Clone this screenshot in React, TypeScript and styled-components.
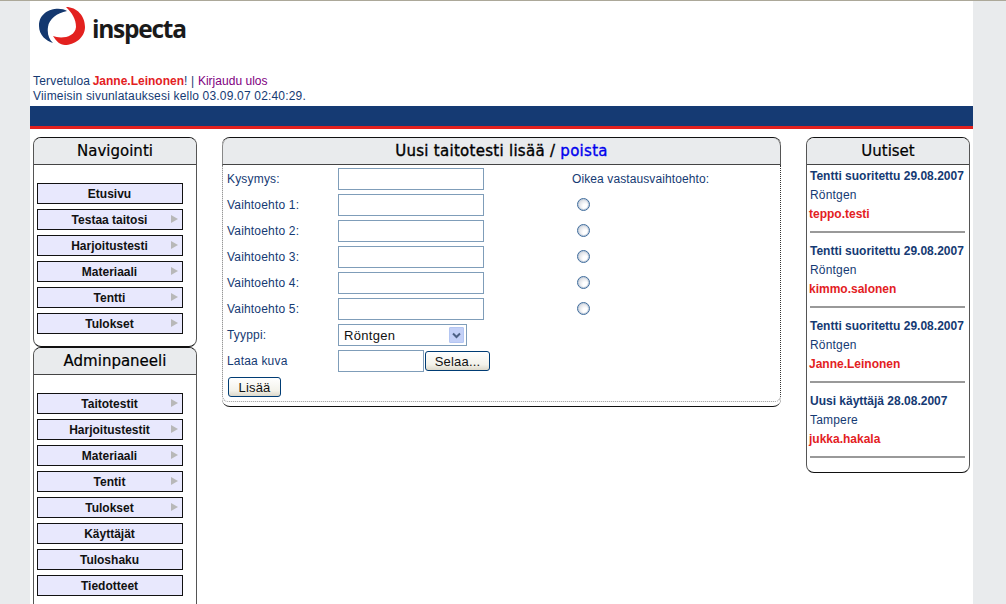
import React from "react";
import styled, { createGlobalStyle } from "styled-components";

const navy = "#153a73";
const red = "#e3211f";

const GlobalStyle = createGlobalStyle`
  html, body {
    margin: 0;
    padding: 0;
    height: 604px;
    overflow: hidden;
    background: #e9ebed;
  }
  body {
    border-top: 1px solid #aca899;
    box-sizing: border-box;
    font-family: "Liberation Sans", Arial, sans-serif;
    font-size: 12px;
    letter-spacing: 0.18px;
    color: ${navy};
  }
`;

const Page = styled.div`
  width: 943px;
  height: 603px;
  margin-left: 30px;
  background: white;
  overflow: hidden;
`;

const LogoRow = styled.div`
  height: 69px;
  padding-left: 9px;
  padding-top: 6px;
  box-sizing: border-box;
  display: flex;
  align-items: flex-start;
`;

const LogoText = styled.span`
  font-family: "Open Sans", sans-serif;
  font-weight: 700;
  font-size: 24.5px;
  line-height: 30px;
  letter-spacing: -1.25px;
  color: #1a1a1a;
  margin-left: 7px;
  margin-top: 7px;
`;

const Welcome = styled.div`
  padding-left: 3px;
  height: 36px;
  line-height: 15px;
  padding-top: 4px;
  box-sizing: border-box;
`;

const Username = styled.strong`
  color: ${red};
  letter-spacing: 0;
  margin-left: -1px;
`;

const Logout = styled.a`
  color: #800080;
  letter-spacing: 0.02px;
`;

const Bar = styled.div`
  height: 20px;
  background: #153a73;
  border-bottom: 3px solid ${red};
`;

const Columns = styled.div`
  display: flex;
  align-items: flex-start;
  padding: 8px 0 0 3px;
`;

const Side = styled.div`
  width: 164px;
  flex: none;
`;

const Box = styled.div<{ $open?: boolean }>`
  box-sizing: border-box;
  border: 1px solid #555;
  border-top: 1px solid #111;
  border-bottom: ${(p) => (p.$open ? "none" : "1px solid #111")};
  border-radius: ${(p) => (p.$open ? "8px 8px 0 0" : "8px")};
  overflow: hidden;
`;

const BoxTitle = styled.div`
  height: 27px;
  box-sizing: border-box;
  background: #e9ebed;
  border-bottom: 1px solid #444;
  font-family: "DejaVu Sans", Verdana, sans-serif;
  font-size: 15px;
  line-height: 26px;
  letter-spacing: 0;
  text-align: center;
  color: #000;
  -webkit-text-stroke: 0.2px #000;
`;

const Menu = styled.div<{ $height: number }>`
  height: ${(p) => p.$height}px;
  box-sizing: border-box;
  padding: 18px 0 0 3px;
  display: flex;
  flex-direction: column;
  gap: 5px;
`;

const MenuItem = styled.a`
  position: relative;
  display: block;
  width: 146px;
  height: 21px;
  box-sizing: border-box;
  background: #e8e8fd;
  border: 1px solid #111;
  color: #111;
  font-weight: 700;
  font-size: 12px;
  letter-spacing: 0;
  line-height: 20px;
  padding-right: 1px;
  text-align: center;
`;

const Arrow = styled.span`
  position: absolute;
  right: 4px;
  top: 5px;
  width: 0;
  height: 0;
  border-left: 7px solid #b8b8b8;
  border-top: 4px solid transparent;
  border-bottom: 4px solid transparent;
`;

const Center = styled.div`
  width: 559px;
  flex: none;
  margin-left: 25px;
  box-sizing: border-box;
  height: 270px;
  border-top: 1px solid #111;
  border-bottom: 1px solid #111;
  border-radius: 8px;
  overflow: hidden;
`;

const CenterTitle = styled(BoxTitle)`
  border-left: 1px solid #888;
  border-right: 1px solid #555;
  border-radius: 8px 8px 0 0;
  letter-spacing: 0.28px;
  -webkit-text-stroke: 0.35px #000;
`;

const PoistaLink = styled.a`
  color: #0000ee;
  -webkit-text-stroke: 0.35px #0000ee;
`;

const FormArea = styled.div`
  height: 237px;
  box-sizing: border-box;
  border-left: 1px dotted #777;
  border-right: 1px dotted #333;
  border-bottom: 1px dotted #999;
  border-radius: 0 0 6px 6px;
  padding: 3px 0 0 4px;
  display: grid;
  grid-template-columns: 111px 234px 1fr;
  grid-auto-rows: 26px;
`;

const Label = styled.label`
  line-height: 22px;
`;

const Field = styled.div`
  display: flex;
  gap: 1px;
`;

const TextInput = styled.input<{ $width: number }>`
  width: ${(p) => p.$width}px;
  height: 22px;
  box-sizing: border-box;
  margin: 0;
  padding: 0 3px;
  border: 1px solid #7f9db9;
  background: white;
`;

const Select = styled.div`
  width: 129px;
  height: 22px;
  box-sizing: border-box;
  border: 1px solid #7f9db9;
  display: flex;
  align-items: center;
  justify-content: space-between;
  padding: 0 2px 0 5px;
  font-size: 13px;
  letter-spacing: 0.3px;
  color: #111;
`;

const SelectArrow = styled.span`
  width: 15px;
  height: 16px;
  background: #c3d0f7;
  border: 1px solid #b4c6f2;
  border-radius: 1px;
  box-sizing: border-box;
  display: flex;
  align-items: center;
  justify-content: center;
`;

const XpButton = styled.button<{ $width: number }>`
  width: ${(p) => p.$width}px;
  height: 20px;
  box-sizing: border-box;
  margin: 1px 0 0;
  padding: 0;
  border: 1px solid #003c74;
  border-radius: 3px;
  background: linear-gradient(#ffffff, #f3f2ea 70%, #dcd8ca);
  font-family: "Liberation Sans", Arial, sans-serif;
  font-size: 13px;
  letter-spacing: 0.2px;
  color: #111;
`;

const AddCell = styled.div`
  grid-column: 1 / -1;
  padding-left: 1px;
`;

const CorrectHead = styled.div`
  line-height: 22px;
  letter-spacing: 0.1px;
`;

const Radio = styled.span`
  display: block;
  width: 13px;
  height: 13px;
  box-sizing: border-box;
  margin: 4px 0 0 5px;
  border: 1px solid #3f6c9c;
  border-radius: 50%;
  background: radial-gradient(circle at 65% 65%, #ffffff 20%, #d8dae0 75%);
  box-shadow: inset 0 0 0 1px #c5d0de;
`;

const NewsColumn = styled.div`
  width: 164px;
  flex: none;
  margin-left: 25px;
`;

const NewsBody = styled.div`
  height: 307px;
  box-sizing: border-box;
  padding: 0 3px;
`;

const NewsItem = styled.div`
  height: 75px;
  box-sizing: border-box;
  padding-top: 2px;
  line-height: 19px;
  display: flex;
  flex-direction: column;
`;

const NewsTitle = styled.strong`
  white-space: nowrap;
  letter-spacing: 0;
`;

const NewsUser = styled.strong`
  color: ${red};
  letter-spacing: 0;
  margin-left: -1px;
`;

const Rule = styled.hr`
  margin: 7px 1px 0 0;
  border: 0;
  height: 2px;
  background: #999;
`;

const navMenu = [
  { label: "Etusivu" },
  { label: "Testaa taitosi", arrow: true },
  { label: "Harjoitustesti", arrow: true },
  { label: "Materiaali", arrow: true },
  { label: "Tentti", arrow: true },
  { label: "Tulokset", arrow: true },
];

const adminMenu = [
  { label: "Taitotestit", arrow: true },
  { label: "Harjoitustestit", arrow: true },
  { label: "Materiaali", arrow: true },
  { label: "Tentit", arrow: true },
  { label: "Tulokset", arrow: true },
  { label: "Käyttäjät" },
  { label: "Tuloshaku" },
  { label: "Tiedotteet" },
];

const news = [
  { title: "Tentti suoritettu 29.08.2007", place: "Röntgen", user: "teppo.testi" },
  { title: "Tentti suoritettu 29.08.2007", place: "Röntgen", user: "kimmo.salonen" },
  { title: "Tentti suoritettu 29.08.2007", place: "Röntgen", user: "Janne.Leinonen" },
  { title: "Uusi käyttäjä 28.08.2007", place: "Tampere", user: "jukka.hakala" },
];

const options = ["Vaihtoehto 1:", "Vaihtoehto 2:", "Vaihtoehto 3:", "Vaihtoehto 4:", "Vaihtoehto 5:"];

function LogoMark() {
  return (
    <svg width="46" height="38" viewBox="0 0 46 38">
      <path
        d="M28 4 C20 -1 0 2 0 19 C0 28 7 34 14 36 C10 32 8 27 9 20 C10 12 18 6 28 4 Z"
        fill="#14386f"
      />
      <path
        d="M27 0 C38 0 46 9 46 20 C46 31 35 38 26 38 C21 38 17 34 14 29 C21 32 36 31 37 20 C37 12 33 6 27 0 Z"
        fill={red}
      />
    </svg>
  );
}

function MenuList({ items, height }: { items: { label: string; arrow?: boolean }[]; height: number }) {
  return (
    <Menu $height={height}>
      {items.map((item) => (
        <MenuItem key={item.label}>
          {item.label}
          {item.arrow && <Arrow />}
        </MenuItem>
      ))}
    </Menu>
  );
}

export default function App() {
  return (
    <Page>
      <GlobalStyle />
      <LogoRow>
        <LogoMark />
        <LogoText>inspecta</LogoText>
      </LogoRow>
      <Welcome>
        Tervetuloa <Username>Janne.Leinonen</Username>! | <Logout>Kirjaudu ulos</Logout>
        <br />
        Viimeisin sivunlatauksesi kello 03.09.07 02:40:29.
      </Welcome>
      <Bar />
      <Columns>
        <Side>
          <Box>
            <BoxTitle>Navigointi</BoxTitle>
            <MenuList items={navMenu} height={181} />
          </Box>
          <Box $open>
            <BoxTitle>Adminpaneeli</BoxTitle>
            <MenuList items={adminMenu} height={240} />
          </Box>
        </Side>
        <Center>
          <CenterTitle>
            Uusi taitotesti lisää / <PoistaLink>poista</PoistaLink>
          </CenterTitle>
          <FormArea>
            <Label>Kysymys:</Label>
            <Field>
              <TextInput $width={146} />
            </Field>
            <CorrectHead>Oikea vastausvaihtoehto:</CorrectHead>
            {options.map((option) => (
              <React.Fragment key={option}>
                <Label>{option}</Label>
                <Field>
                  <TextInput $width={146} />
                </Field>
                <div>
                  <Radio />
                </div>
              </React.Fragment>
            ))}
            <Label>Tyyppi:</Label>
            <Field>
              <Select>
                Röntgen
                <SelectArrow>
                  <svg width="9" height="7" viewBox="0 0 9 7">
                    <path d="M1 1.5 L4.5 5 L8 1.5" fill="none" stroke="#4d6185" strokeWidth="2" />
                  </svg>
                </SelectArrow>
              </Select>
            </Field>
            <div />
            <Label>Lataa kuva</Label>
            <Field>
              <TextInput $width={86} />
              <XpButton $width={65}>Selaa...</XpButton>
            </Field>
            <div />
            <AddCell>
              <XpButton $width={53}>Lisää</XpButton>
            </AddCell>
          </FormArea>
        </Center>
        <NewsColumn>
          <Box>
            <BoxTitle>Uutiset</BoxTitle>
            <NewsBody>
              {news.map((entry, i) => (
                <NewsItem key={i}>
                  <NewsTitle>{entry.title}</NewsTitle>
                  <span>{entry.place}</span>
                  <NewsUser>{entry.user}</NewsUser>
                  <Rule />
                </NewsItem>
              ))}
            </NewsBody>
          </Box>
        </NewsColumn>
      </Columns>
    </Page>
  );
}
